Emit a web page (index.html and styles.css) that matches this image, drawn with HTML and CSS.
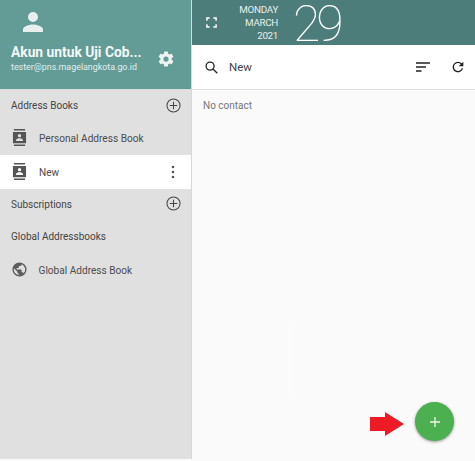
FILE: index.html
```html
<!DOCTYPE html>
<html lang="en">
<head>
<meta charset="utf-8">
<title>Contacts</title>
<link rel="stylesheet" href="styles.css">
</head>
<body>
<div class="app">
  <aside class="side">
    <header class="profile">
      <svg class="avatar" viewBox="0 0 24 24"><path d="M12 12a5 5 0 1 0 0-10 5 5 0 0 0 0 10zm0 2.500c-3.300 0-10 1.700-10 5V22h20v-2.500c0-3.300-6.700-5-10-5z"/></svg>
      <div class="who">
        <div class="names">
          <div class="name">Akun untuk Uji Cob...</div>
          <div class="mail">tester@pns.magelangkota.go.id</div>
        </div>
        <svg class="gear" viewBox="0 0 24 24"><path d="M19.400 13c.04-.3.100-.66.100-1s-.03-.7-.08-1l2.100-1.650c.2-.15.250-.42.130-.64l-2-3.460c-.12-.22-.4-.3-.6-.22l-2.500 1c-.52-.4-1.080-.73-1.700-.98l-.37-2.650A.5.500 0 0 0 14 2h-4a.5.500 0 0 0-.5.420l-.37 2.650c-.62.250-1.180.58-1.700.98l-2.500-1c-.22-.08-.48 0-.6.220l-2 3.460c-.13.220-.07.490.12.640L4.570 11c-.04.3-.07.67-.07 1s.03.700.07 1l-2.100 1.650c-.2.150-.250.420-.130.640l2 3.460c.12.220.4.300.6.220l2.500-1c.52.4 1.080.73 1.700.98l.37 2.650c.04.240.250.420.5.420h4c.25 0 .46-.18.5-.42l.37-2.650c.62-.25 1.180-.58 1.700-.98l2.500 1c.22.080.48 0 .6-.22l2-3.460c.12-.22.070-.49-.12-.64zM12 15.500a3.500 3.500 0 1 1 0-7 3.500 3.500 0 0 1 0 7z"/></svg>
      </div>
    </header>
    <div class="section first">
      <span>Address Books</span>
      <svg class="add" viewBox="0 0 16 16"><circle cx="8" cy="8" r="7"/><path d="M8 4v8M4 8h8"/></svg>
    </div>
    <div class="row">
      <svg class="book" viewBox="0 0 16 18"><path d="M2 0h12v1.500H2zM2 16.500h12V18H2zM1 3h14v12H1zm7 2.200a1.800 1.800 0 1 0 0 3.600 1.800 1.800 0 0 0 0-3.600zM4.300 12.800h7.400v-1.100c0-1.300-2.500-2-3.700-2s-3.700.7-3.700 2z" fill-rule="evenodd"/></svg>
      <span>Personal Address Book</span>
    </div>
    <div class="row active">
      <svg class="book" viewBox="0 0 16 18"><path d="M2 0h12v1.500H2zM2 16.500h12V18H2zM1 3h14v12H1zm7 2.200a1.800 1.800 0 1 0 0 3.600 1.800 1.800 0 0 0 0-3.600zM4.300 12.800h7.400v-1.100c0-1.300-2.500-2-3.700-2s-3.700.7-3.700 2z" fill-rule="evenodd"/></svg>
      <span class="grow">New</span>
      <svg class="more" viewBox="0 0 4 14"><circle cx="2" cy="2" r="1.300"/><circle cx="2" cy="7" r="1.300"/><circle cx="2" cy="12" r="1.300"/></svg>
    </div>
    <div class="section tight">
      <span>Subscriptions</span>
      <svg class="add" viewBox="0 0 16 16"><circle cx="8" cy="8" r="7"/><path d="M8 4v8M4 8h8"/></svg>
    </div>
    <div class="section plain"><span>Global Addressbooks</span></div>
    <div class="row">
      <svg class="globe" viewBox="0 0 24 24"><path d="M12 2a10 10 0 1 0 0 20 10 10 0 0 0 0-20zm-1 17.900A8 8 0 0 1 4.200 10.200L9 15v1c0 1.100.9 2 2 2zm6.900-2.500c-.3-.8-1-1.400-1.900-1.400h-1v-3c0-.6-.4-1-1-1H8v-2h2c.6 0 1-.4 1-1V7h2c1.100 0 2-.9 2-2v-.4a8 8 0 0 1 2.900 12.800z"/></svg>
      <span>Global Address Book</span>
    </div>
  </aside>
  <main class="main">
    <header class="clock">
      <svg class="expand" viewBox="0 0 12 12"><path d="M1 4V1h3M8 1h3v3M11 8v3H8M4 11H1V8"/></svg>
      <div class="date"><div>MONDAY</div><div>MARCH</div><div>2021</div></div>
      <div class="day">29</div>
    </header>
    <div class="toolbar">
      <svg class="search" viewBox="0 0 14 14"><circle cx="5.500" cy="5.500" r="4.300"/><path d="M8.700 8.700l4.500 4.500"/></svg>
      <span class="query">New</span>
      <svg class="sort" viewBox="0 0 14 10"><path d="M0 1h14M0 5h10M0 9h5.500"/></svg>
      <svg class="refresh" viewBox="0 0 24 24"><path d="M17.650 6.350A8 8 0 1 0 19.730 14h-2.080a6 6 0 1 1-1.410-6.240L13 11h7V4z"/></svg>
    </div>
    <div class="list">
      <p class="empty">No contact</p>
      <div class="streak"></div>
      <div class="fab-wrap">
        <svg class="arrow" viewBox="0 0 34 24"><path d="M0 5h15V0l19 12-19 12v-5H0z"/></svg>
        <button class="fab" type="button"><svg viewBox="0 0 10 10"><path d="M5 0v10M0 5h10"/></svg></button>
      </div>
    </div>
  </main>
</div>
</body>
</html>
```
FILE: styles.css
```css
* { box-sizing: border-box; }
html, body { margin: 0; height: 100%; }
body { font-family: "Roboto", "Lato", sans-serif; background: #fafafa; overflow: hidden; }
.app { display: flex; width: 475px; height: 459px; }
.side { width: 192px; flex: none; background: #e0e0e0; border-right: 1px solid #d8d8d8; }
.profile { height: 90px; background: #639b96; border-bottom: 1px solid #d8dcdb; color: #fff; padding: 10px 0 0 11px; display: flex; flex-direction: column; }
.avatar { width: 24px; height: 24px; fill: #e8f0ef; margin-left: 10px; flex: none; }
.who { display: flex; align-items: center; margin-top: 9px; }
.names { width: 146px; }
.name { font-size: 13.800px; font-weight: 700; line-height: 18px; white-space: nowrap; color: #f4f8f7; }
.mail { font-size: 8.900px; line-height: 13px; white-space: nowrap; color: #e4eeec; }
.gear { width: 18px; height: 18px; fill: #eef3f2; flex: none; }
.section { display: flex; align-items: center; justify-content: space-between; height: 31px; padding: 0 11px; font-size: 10px; color: #444; }
.section span, .row span { padding-top: 2px; }
.section.first span { padding-top: 0; }
.section.tight { height: 30px; }
.section.plain { height: 34px; }
.add { width: 15px; height: 15px; fill: none; stroke: #444; stroke-width: 1.100; margin-right: -1px; }
.row { display: flex; align-items: center; height: 33.500px; padding: 0 16px 0 12px; font-size: 10.100px; color: #4d4d4d; }
.row.active { background: #fff; height: 34px; }
.row .grow { flex: 1; }
.book { width: 15px; height: 17px; fill: #555; margin-right: 12px; flex: none; }
.globe { width: 17px; height: 17px; fill: #5c5c5c; margin: 0 10.500px 0 -1px; flex: none; }
.more { width: 4px; height: 14px; fill: #555; }
.main { flex: 1; display: flex; flex-direction: column; min-width: 0; }
.clock { height: 45px; background: #4d7d7b; display: flex; align-items: center; color: #e6efee; padding-left: 14px; flex: none; }
.expand { width: 11px; height: 11px; fill: none; stroke: #fff; stroke-width: 1.600; flex: none; }
.date { width: 61px; text-align: right; font-size: 9.800px; letter-spacing: -.3px; line-height: 13px; flex: none; }
.day { font-weight: 100; font-size: 50px; line-height: 37px; letter-spacing: -4px; margin: 4px 0 0 15px; color: #fff; }
.toolbar { height: 45px; background: #fff; border-bottom: 1px solid #e0e0e0; display: flex; align-items: center; padding: 0 9px 0 13px; flex: none; font-size: 11.500px; color: #444; }
.search { width: 13px; height: 13px; fill: none; stroke: #222; stroke-width: 1.400; flex: none; }
.query { flex: 1; margin-left: 11px; }
.sort { width: 14px; height: 10px; fill: none; stroke: #222; stroke-width: 1.300; margin-right: 20px; }
.refresh { width: 16px; height: 16px; fill: #222; }
.list { flex: 1; position: relative; background: #fafafa; }
.empty { margin: 0; padding: 9px 0 0 11px; font-size: 10px; line-height: 14px; color: #777; }
.streak { position: absolute; left: 98px; top: 233px; width: 1px; height: 72px; background: #fff; }
.fab-wrap { position: absolute; right: 21px; bottom: 18px; display: flex; align-items: center; gap: 11px; }
.arrow { width: 34px; height: 24px; fill: #ed1c24; margin-top: 5px; }
.fab { width: 39px; height: 39px; border-radius: 50%; border: 0; padding: 0; background: #4caf50; box-shadow: 0 1px 3px rgba(0,0,0,.4); display: flex; align-items: center; justify-content: center; }
.fab svg { width: 10px; height: 10px; fill: none; stroke: #f3f3e8; stroke-width: 1.300; }
```
